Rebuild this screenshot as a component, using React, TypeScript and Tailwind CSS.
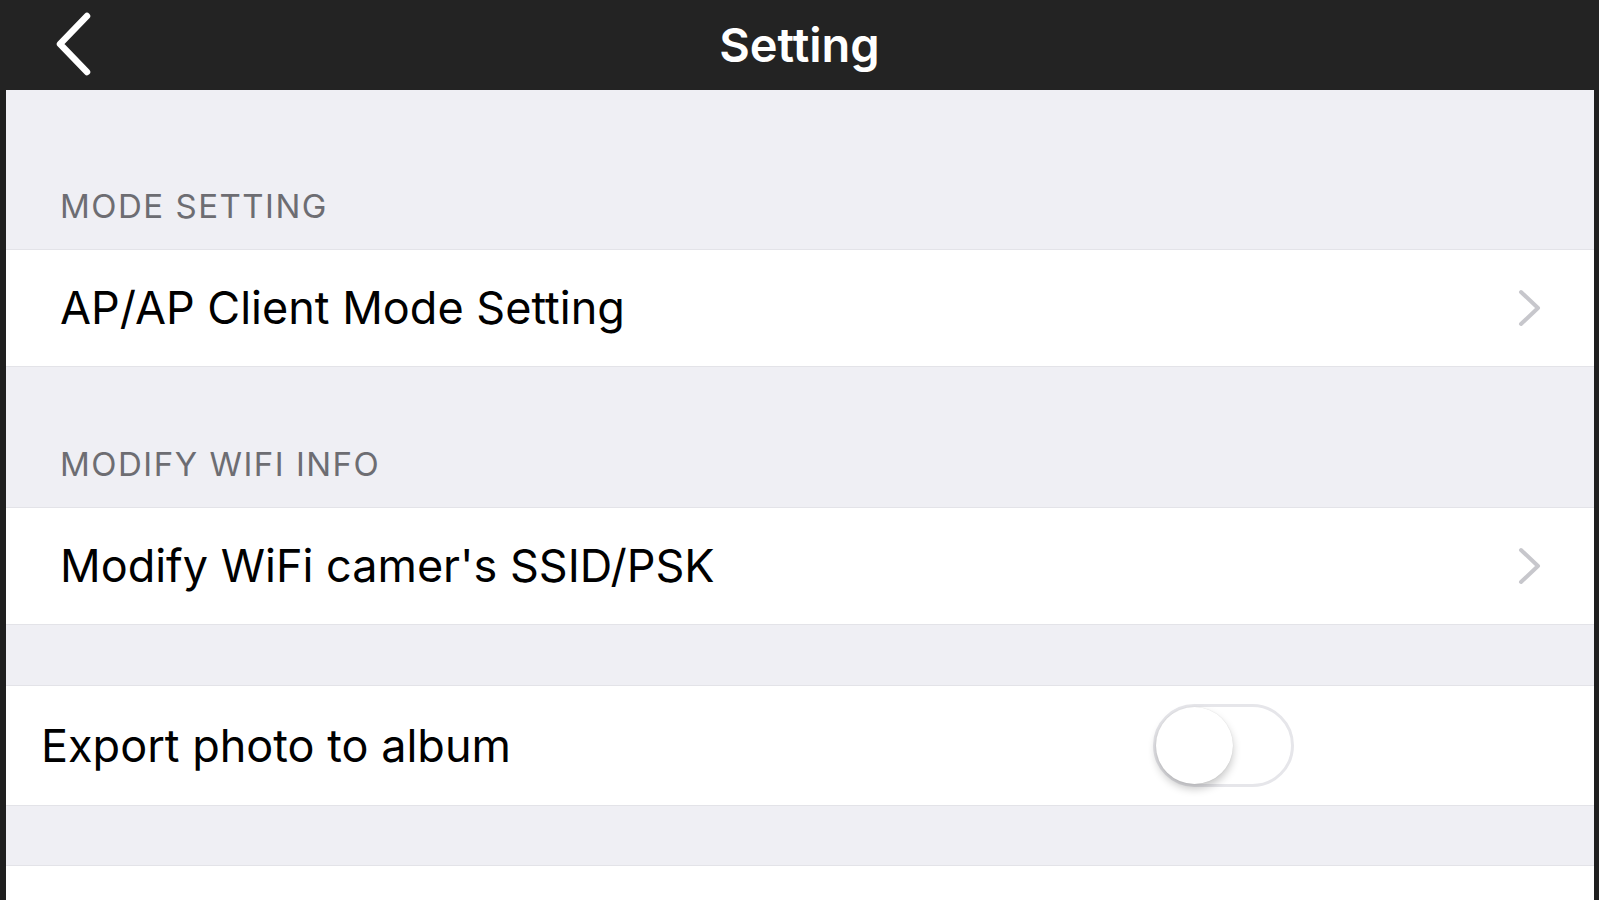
const FONT = { fontFamily: "Inter, 'Noto Sans', sans-serif" };

function BackIcon() {
  return (
    <svg width="40" height="64" viewBox="0 0 40 64" fill="none">
      <path d="M32 4 L5 32 L32 60" stroke="white" strokeWidth="6.5" strokeLinecap="round" strokeLinejoin="round" />
    </svg>
  );
}

function Chevron() {
  return (
    <svg width="26" height="38" viewBox="0 0 26 38" fill="none">
      <path d="M4 3 L21 19 L4 35" stroke="#c7c7cc" strokeWidth="4" strokeLinecap="round" strokeLinejoin="round" />
    </svg>
  );
}

function SectionHeader({ label, height }: { label: string; height: string }) {
  return (
    <div className={`flex items-end pl-[54px] pb-[24px] ${height}`}>
      <span className="text-[33px] leading-[38px] text-[#6d6d72] tracking-[1.5px]">{label}</span>
    </div>
  );
}

function NavRow({ label }: { label: string }) {
  return (
    <div className="flex h-[118px] items-center justify-between bg-white pl-[54px] pr-[51px] border-y border-[#e3e3e8]">
      <span className="text-[45px] text-black">{label}</span>
      <Chevron />
    </div>
  );
}

function Toggle({ on }: { on: boolean }) {
  return (
    <div className="flex h-[83px] w-[141px] items-center rounded-full border-[3px] border-[#e6e6ea] bg-white">
      <div
        className={`h-[77px] w-[77px] rounded-full bg-white shadow-[0_5px_9px_rgba(0,0,0,0.22),0_0_1px_rgba(0,0,0,0.15)] ${on ? "ml-auto" : ""}`}
      />
    </div>
  );
}

export default function App() {
  return (
    <div className="flex h-[900px] w-full flex-col overflow-hidden bg-[#1f1f1f]" style={FONT}>
      <header className="relative flex h-[90px] shrink-0 items-center justify-center bg-[#232323]">
        <div className="absolute left-[55px] top-[12px]">
          <BackIcon />
        </div>
        <h1 className="text-[47px] font-semibold text-white">Setting</h1>
      </header>

      <div className="flex flex-1 flex-col bg-[#efeff4] ml-[6px] mr-[5px]">
        <SectionHeader label="MODE SETTING" height="h-[159px]" />
        <NavRow label="AP/AP Client Mode Setting" />

        <SectionHeader label="MODIFY WIFI INFO" height="h-[140px]" />
        <NavRow label="Modify WiFi camer's SSID/PSK" />

        <div className="h-[60px] shrink-0" />
        <div className="flex h-[121px] shrink-0 items-center justify-between bg-white pl-[35px] pr-[300px] border-y border-[#e3e3e8]">
          <span className="text-[45px] text-black">Export photo to album</span>
          <Toggle on={false} />
        </div>

        <div className="h-[59px] shrink-0" />
        <div className="flex-1 bg-white border-t border-[#e3e3e8]" />
      </div>
    </div>
  );
}
